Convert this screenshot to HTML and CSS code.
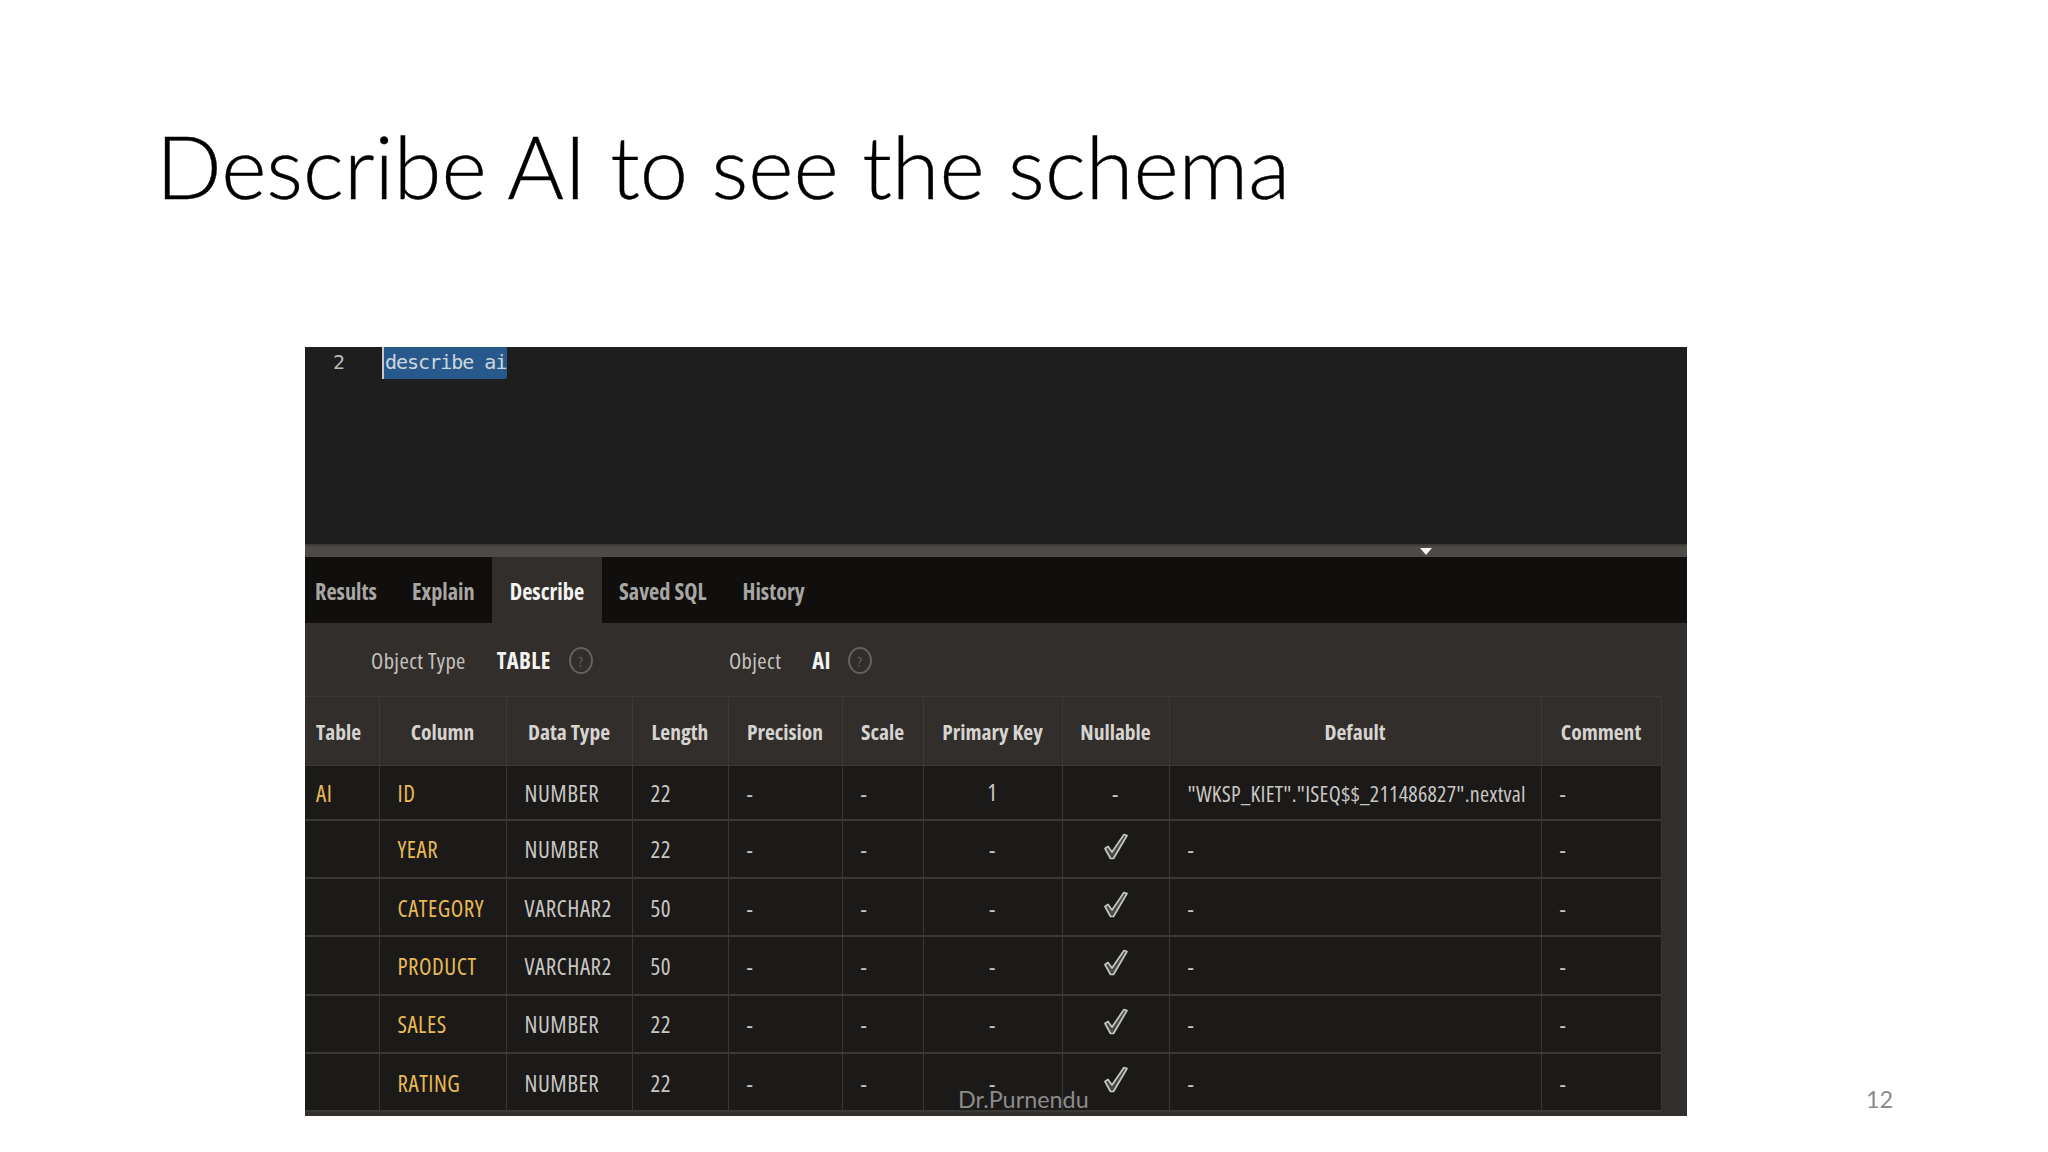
FILE: index.html
```html
<!DOCTYPE html>
<html lang="en">
<head>
<meta charset="utf-8">
<title>Describe AI to see the schema</title>
<link rel="stylesheet" href="styles.css">
</head>
<body>
<svg class="defs" width="0" height="0" aria-hidden="true">
  <symbol id="check" viewBox="0 0 24 27">
    <path d="M1 15.5 L4 13.5 L8 19 L20 1.5 L23 2.5 L9.5 25.5 L6.5 25.5 Z" fill="#4a4a48" stroke="#c6c6c4" stroke-width="1.7" stroke-linejoin="round"/>
  </symbol>
</svg>
<main class="slide">
  <h1 class="title">Describe AI to see the schema</h1>
  <section class="shot">
    <div class="editor">
      <span class="gutter">2</span>
      <span class="code">describe ai</span>
    </div>
    <div class="splitter"><span class="grip"></span></div>
    <nav class="tabs">
      <span class="tab t-results">Results</span>
      <span class="tab t-explain">Explain</span>
      <span class="tab t-describe active">Describe</span>
      <span class="tab t-saved">Saved SQL</span>
      <span class="tab t-history">History</span>
    </nav>
    <div class="panel">
      <div class="toolbar">
        <span class="tlabel l-type">Object Type</span>
        <b class="tvalue v-type">TABLE</b>
        <span class="help h-type">?</span>
        <span class="tlabel l-obj">Object</span>
        <b class="tvalue v-obj">AI</b>
        <span class="help h-obj">?</span>
      </div>
      <table class="grid">
        <colgroup>
          <col class="c1"><col class="c2"><col class="c3"><col class="c4"><col class="c5">
          <col class="c6"><col class="c7"><col class="c8"><col class="c9"><col class="c10">
        </colgroup>
        <thead>
          <tr><th class="first">Table</th><th>Column</th><th>Data Type</th><th>Length</th><th>Precision</th><th>Scale</th><th>Primary Key</th><th>Nullable</th><th>Default</th><th>Comment</th></tr>
        </thead>
        <tbody>
          <tr class="row-one"><td class="gold first">AI</td><td class="gold">ID</td><td>NUMBER</td><td>22</td><td class="dash">-</td><td class="dash">-</td><td class="mid">1</td><td class="mid dash">-</td><td class="def">"WKSP_KIET"."ISEQ$$_211486827".nextval</td><td class="dash">-</td></tr>
          <tr><td class="first"></td><td class="gold">YEAR</td><td>NUMBER</td><td>22</td><td class="dash">-</td><td class="dash">-</td><td class="mid dash">-</td><td class="mid"><svg class="tick"><use href="#check"/></svg></td><td class="dash">-</td><td class="dash">-</td></tr>
          <tr><td class="first"></td><td class="gold">CATEGORY</td><td>VARCHAR2</td><td>50</td><td class="dash">-</td><td class="dash">-</td><td class="mid dash">-</td><td class="mid"><svg class="tick"><use href="#check"/></svg></td><td class="dash">-</td><td class="dash">-</td></tr>
          <tr><td class="first"></td><td class="gold">PRODUCT</td><td>VARCHAR2</td><td>50</td><td class="dash">-</td><td class="dash">-</td><td class="mid dash">-</td><td class="mid"><svg class="tick"><use href="#check"/></svg></td><td class="dash">-</td><td class="dash">-</td></tr>
          <tr><td class="first"></td><td class="gold">SALES</td><td>NUMBER</td><td>22</td><td class="dash">-</td><td class="dash">-</td><td class="mid dash">-</td><td class="mid"><svg class="tick"><use href="#check"/></svg></td><td class="dash">-</td><td class="dash">-</td></tr>
          <tr><td class="first"></td><td class="gold">RATING</td><td>NUMBER</td><td>22</td><td class="dash">-</td><td class="dash">-</td><td class="mid dash">-</td><td class="mid"><svg class="tick"><use href="#check"/></svg></td><td class="dash">-</td><td class="dash">-</td></tr>
        </tbody>
      </table>
    </div>
  </section>
  <footer class="foot">
    <span class="author">Dr.Purnendu</span>
    <span class="pageno">12</span>
  </footer>
</main>
</body>
</html>
```
FILE: styles.css
```css
* { box-sizing: border-box; }
html, body { margin: 0; padding: 0; background: #fff; }
.defs { position: absolute; }
.slide { position: relative; width: 2048px; height: 1152px; overflow: hidden; padding-top: 116px; }
.title { margin: 0 0 0 156px; height: 231px; font: 300 86.6px/100px Lato, sans-serif; color: #000; white-space: nowrap; -webkit-text-stroke: .4px #000; }

.shot { margin-left: 305px; width: 1382px; height: 769px; display: flex; flex-direction: column; background: #312e2b; font-family: "Open Sans", sans-serif; font-stretch: 75%; }

.editor { height: 197px; background: #1e1e1f; display: flex; align-items: flex-start; }
.gutter { width: 77px; padding: 0 0 0 28px; font: 20px/30px "DejaVu Sans Mono", monospace; color: #b9b9b5; }
.code { height: 32px; padding: 0 1px; border-left: 2px solid #c9c9c9; border-radius: 0 0 3px 0; background: #27598c; font: 20px/30px "DejaVu Sans Mono", monospace; letter-spacing: -1px; color: #cfd6dc; }

.splitter { height: 13px; background: #4e4b46; border-top: 2px solid #3d3b38; position: relative; }
.grip { position: absolute; left: 1115px; top: 2px; border-left: 6px solid transparent; border-right: 6px solid transparent; border-top: 7px solid #f4f4f4; }

.tabs { height: 66px; background: #100f0e; display: flex; align-items: stretch; }
.tab { display: flex; align-items: center; padding-top: 3px; font-size: 22.3px; font-weight: 700; color: #a8a6a2; }
.t-results { margin-left: 10px; }
.t-explain { margin-left: 35px; }
.t-describe { margin-left: 17px; padding: 3px 18px 0; background: #312e2b; color: #f4f4f2; }
.t-saved { margin-left: 17px; }
.t-history { margin-left: 36px; }

.panel { flex: 1; background: #312e2b; }
.toolbar { height: 73px; padding-top: 2px; display: flex; align-items: center; font-size: 22.5px; letter-spacing: .4px; color: #c4c2be; }
.tlabel { font-weight: 400; }
.tvalue { color: #f4f4f2; font-weight: 700; }
.help { width: 24px; height: 27px; border: 2px solid #65625d; border-radius: 50%; display: flex; align-items: center; justify-content: center; font-size: 15px; color: #65625d; }
.l-type { margin-left: 66px; }
.v-type { margin-left: 31px; }
.h-type { margin-left: 18px; }
.l-obj { margin-left: 136px; }
.v-obj { margin-left: 31px; }
.h-obj { margin-left: 17px; }

.grid { width: 1356px; table-layout: fixed; border-collapse: collapse; font-size: 23px; letter-spacing: .5px; color: #c9c7c3; }
.c1 { width: 74px; } .c2 { width: 127px; } .c3 { width: 126px; } .c4 { width: 96px; } .c5 { width: 114px; }
.c6 { width: 81px; } .c7 { width: 139px; } .c8 { width: 107px; } .c9 { width: 372px; } .c10 { width: 120px; }
.grid th { height: 69px; padding: 0; text-align: center; font-weight: 700; font-size: 21.5px; letter-spacing: 0; color: #d6d4d0; border: 1px solid #3c3a36; }
.grid th.first { text-align: left; padding-left: 11px; border-left: 0; }
.grid td { height: 58.4px; padding: 1px 0 0 18px; background: #1b1a19; border: 1px solid #3a3835; border-bottom-width: 2px; white-space: nowrap; overflow: hidden; }
.grid td.first { padding-left: 11px; border-left: 0; }
.grid .row-one td { height: 54px; }
.grid td.gold { color: #e8ba55; }
.grid td.mid { padding: 0; text-align: center; }
.grid td.def { font-size: 22px; letter-spacing: .25px; }
.grid td.dash { padding-top: 3px; }
.tick { display: block; width: 24px; height: 27px; margin: -5px auto 0; }

.foot { position: absolute; left: 0; right: 0; top: 1084px; height: 30px; font: 23.4px/30px Lato, sans-serif; color: #8b8b8b; }
.author { position: absolute; left: 958px; }
.pageno { position: absolute; left: 1866px; }
```
